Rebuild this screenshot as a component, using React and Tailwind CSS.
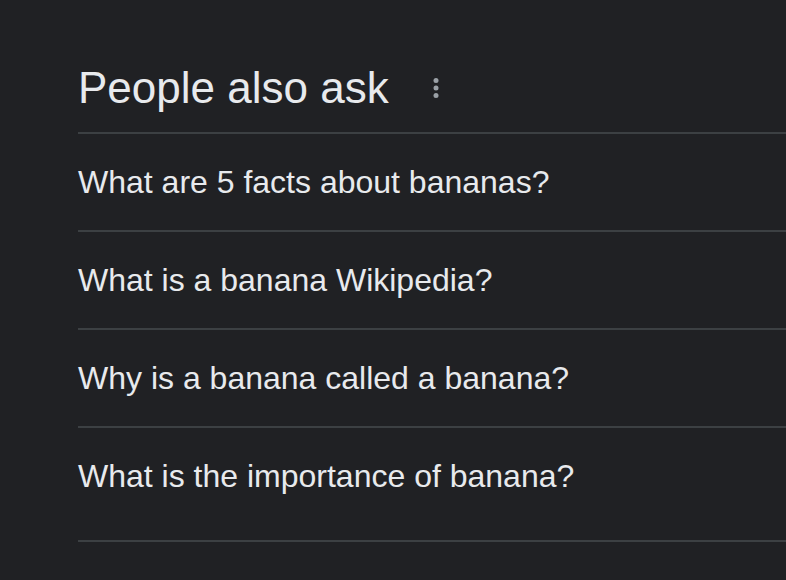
const QUESTIONS = [
  'What are 5 facts about bananas?',
  'What is a banana Wikipedia?',
  'Why is a banana called a banana?',
  'What is the importance of banana?',
];

function MoreVert() {
  return (
    <svg width="10" height="24" viewBox="0 0 10 24" className="text-[#9aa0a6]" aria-hidden="true">
      <circle cx="5" cy="4.5" r="2.5" fill="currentColor" />
      <circle cx="5" cy="12" r="2.5" fill="currentColor" />
      <circle cx="5" cy="19.5" r="2.5" fill="currentColor" />
    </svg>
  );
}

export default function App() {
  return (
    <div className="h-[580px] w-[786px] overflow-hidden bg-[#202124] pl-[78px] pt-[60px] font-['Liberation_Sans',Arial,sans-serif] text-[#e8eaed]">
      <div className="mb-4 flex h-[56px] items-center">
        <h2 className="text-[44px] leading-[56px] font-normal">People also ask</h2>
        <button type="button" className="ml-[42px] flex items-center">
          <MoreVert />
        </button>
      </div>

      <div className="border-b-2 border-[#3c4043]">
        {QUESTIONS.map((q, i) => (
          <div
            key={q}
            className={`border-t-2 border-[#3c4043] ${i === QUESTIONS.length - 1 ? 'pb-4' : ''}`}
          >
            <div className="flex h-[96px] items-center text-[32px] leading-[36px]">{q}</div>
          </div>
        ))}
      </div>
    </div>
  );
}
